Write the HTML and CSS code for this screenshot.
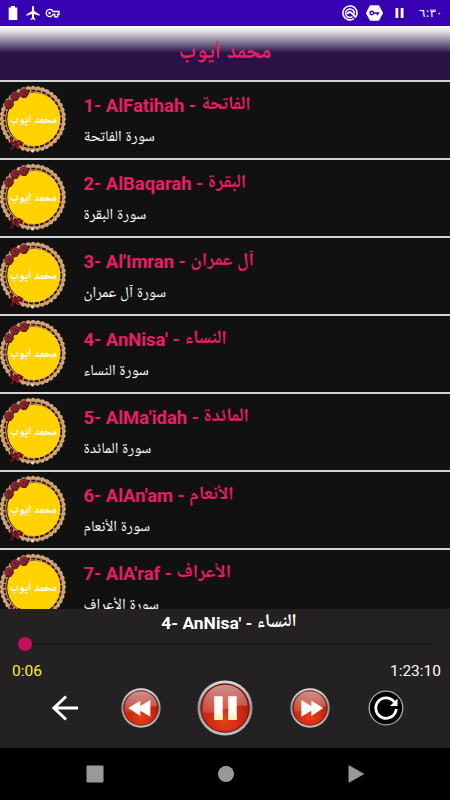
FILE: index.html
```html
<!DOCTYPE html>
<html lang="ar">
<head>
    <meta charset="UTF-8">
    <meta name="viewport" content="width=device-width, initial-scale=1.0">
    <title>محمد أيوب</title>
    <link rel="stylesheet" href="styles.css">
</head>
<body>
    <!-- shared artwork -->
    <svg class="defs" width="0" height="0" aria-hidden="true">
        <defs>
            <radialGradient id="red" cx="50%" cy="75%" r="70%">
                <stop offset="0" stop-color="#e8401c"/>
                <stop offset="0.6" stop-color="#c8250f"/>
                <stop offset="1" stop-color="#8e1009"/>
            </radialGradient>
            <linearGradient id="gloss" x1="0" y1="0" x2="0" y2="1">
                <stop offset="0" stop-color="#fff" stop-opacity="0.55"/>
                <stop offset="1" stop-color="#fff" stop-opacity="0.15"/>
            </linearGradient>
            <linearGradient id="metal" x1="0" y1="0" x2="0" y2="1">
                <stop offset="0" stop-color="#d8dadb"/>
                <stop offset="0.5" stop-color="#929596"/>
                <stop offset="1" stop-color="#bfc1c2"/>
            </linearGradient>
            <g id="ball">
                <circle cx="30" cy="30" r="29.5" fill="url(#metal)"/>
                <circle cx="30" cy="30" r="26.5" fill="#74100b"/>
                <circle cx="30" cy="30" r="25.5" fill="url(#red)"/>
                <path d="M6 28a24 23 0 0 1 48 0Q42 26 30 31T6 35z" fill="url(#gloss)"/>
            </g>
            <g id="rose">
                <path d="M-4-3L0-5l4 2 1 4-3 4h-4l-3-4z" fill="#6d1d25"/>
                <circle cx="-.5" cy="-.5" r="3.200" fill="#8c2d36"/>
                <path d="M-2 0q1-3 3-1t-2 2" fill="none" stroke="#561019" stroke-width=".8"/>
            </g>
        </defs>
        <symbol id="badge" viewBox="0 0 70 70">
            <circle cx="32.800" cy="35" r="30.800" fill="none" stroke="#b98d60" stroke-width="3"/>
            <circle cx="32.800" cy="35" r="31.300" fill="none" stroke="#d2aa7a" stroke-width="3.800" stroke-dasharray="0.1 4.816" stroke-linecap="round"/>
            <circle cx="32.800" cy="35" r="28.900" fill="none" stroke="#cda273" stroke-width="4.600"/>
            <circle cx="32.800" cy="35" r="28.400" fill="none" stroke="#3a1210" stroke-width="1.900" stroke-dasharray="4.200 1.300"/>
            <circle cx="33.800" cy="35.300" r="26.600" fill="#ffd200"/>
            <use href="#rose" x="9" y="20"/>
            <use href="#rose" x="15" y="12"/>
            <use href="#rose" x="24" y="9"/>
            <path d="M10 58l5 2 5 5M11 66l4-6 4-3 3 2-4 2-4-3M10 54l3 5" fill="none" stroke="#7c1117" stroke-width="2"/>
            <circle cx="32.500" cy="67" r="1.500" fill="#ded8d2"/>
            <text class="badge-text" x="33.500" y="41" text-anchor="middle" textLength="47" lengthAdjust="spacingAndGlyphs">محمد أيوب</text>
        </symbol>
    </svg>

    <div class="status-bar">
        <div class="status-icons">
            <svg width="10" height="14" viewBox="0 0 10 14"><path d="M3 0h4v1.400h2.300V14H.7V1.400H3z" fill="#fff"/></svg>
            <svg class="plane" width="14" height="14" viewBox="2 2 19 20"><path d="M21 16v-2l-8-5V3.500a1.500 1.500 0 0 0-3 0V9l-8 5v2l8-2.500V19l-2 1.500V22l3.500-1 3.500 1v-1.500L13 19v-5.500z" fill="#fff"/></svg>
            <svg width="15" height="10" viewBox="0 0 15 10"><path d="M8 3.500h6v3h-1.400v2.300H9.800V6.500H8a3.600 3.600 0 1 1 0-3z" fill="none" stroke="#fff" stroke-width="1.300"/><circle cx="4.600" cy="5" r="1.300" fill="#fff"/></svg>
        </div>
        <div class="status-icons right">
            <svg width="16" height="16" viewBox="0 0 16 16"><path d="M12 13.700A7 7 0 1 1 14 11.500" fill="none" stroke="#fff" stroke-width="1.600"/><path d="M10.500 11.700A4.300 4.300 0 1 1 12.200 9" fill="none" stroke="#fff" stroke-width="1.500"/><path d="M5.500 9q1.500-3 3.500-1.500l5 5" fill="none" stroke="#fff" stroke-width="1.800"/></svg>
            <svg width="17" height="16" viewBox="0 0 17 16"><path d="M5 .3h7Q13 .3 13.500 1.200L16.700 7.200q.4.800 0 1.600l-3.200 6q-.5.900-1.500.9H5q-1 0-1.500-.9L.3 8.800q-.4-.8 0-1.600l3.200-6Q4 .3 5 .3z" fill="#fff"/><circle cx="5.700" cy="8" r="1.700" fill="none" stroke="#3700b3" stroke-width="1.400"/><path d="M7.300 8h6M11.500 8v2.200" stroke="#3700b3" stroke-width="1.500"/></svg>
            <svg class="bars" width="9" height="10" viewBox="0 0 9 10"><path d="M.5 0h2.800v10H.5zM5.700 0h2.800v10H5.700z" fill="#fff"/></svg>
            <span class="clock">٦:٣٠</span>
        </div>
    </div>

    <h1 class="header">محمد أيوب</h1>

    <div class="list">
        <div class="row">
            <svg class="badge"><use href="#badge"/></svg>
            <div class="info">
                <div class="name">1- AlFatihah - <span class="ar">الفاتحة</span></div>
                <div class="sub">سورة الفاتحة</div>
            </div>
        </div>
        <div class="row">
            <svg class="badge"><use href="#badge"/></svg>
            <div class="info">
                <div class="name">2- AlBaqarah - <span class="ar">البقرة</span></div>
                <div class="sub">سورة البقرة</div>
            </div>
        </div>
        <div class="row">
            <svg class="badge"><use href="#badge"/></svg>
            <div class="info">
                <div class="name">3- Al'Imran - <span class="ar">آل عمران</span></div>
                <div class="sub">سورة آل عمران</div>
            </div>
        </div>
        <div class="row">
            <svg class="badge"><use href="#badge"/></svg>
            <div class="info">
                <div class="name">4- AnNisa' - <span class="ar">النساء</span></div>
                <div class="sub">سورة النساء</div>
            </div>
        </div>
        <div class="row">
            <svg class="badge"><use href="#badge"/></svg>
            <div class="info">
                <div class="name">5- AlMa'idah - <span class="ar">المائدة</span></div>
                <div class="sub">سورة المائدة</div>
            </div>
        </div>
        <div class="row">
            <svg class="badge"><use href="#badge"/></svg>
            <div class="info">
                <div class="name">6- AlAn'am - <span class="ar">الأنعام</span></div>
                <div class="sub">سورة الأنعام</div>
            </div>
        </div>
        <div class="row">
            <svg class="badge"><use href="#badge"/></svg>
            <div class="info">
                <div class="name">7- AlA'raf - <span class="ar">الأعراف</span></div>
                <div class="sub">سورة الأعراف</div>
            </div>
        </div>
    </div>

    <div class="player">
        <div class="now-playing">4- AnNisa' - <span class="ar">النساء</span></div>
        <div class="seek"><span class="thumb"></span><span class="track"></span></div>
        <div class="times">
            <span class="elapsed">0:06</span>
            <span>1:23:10</span>
        </div>
        <div class="controls">
            <svg class="back" width="26" height="26" viewBox="0 0 26 26"><path d="M26 13H2M14 1.500L2 13l12 11.500" fill="none" stroke="#fff" stroke-width="3"/></svg>
            <svg class="prev" width="40" height="40" viewBox="0 0 60 60"><use href="#ball"/><path d="M11 30L29 19v8l15-9v25L29 34v8z" fill="#fff"/></svg>
            <svg class="pause" width="56" height="56" viewBox="0 0 60 60"><use href="#ball"/><path d="M18.500 17.500h9v25h-9zM33.500 17.500h9v25h-9z" fill="#fff"/><path d="M18.500 37h9v5.500h-9zM33.500 37h9v5.500h-9z" fill="#fff3bd"/></svg>
            <svg class="next" width="40" height="40" viewBox="0 0 60 60"><use href="#ball"/><path d="M50 30L32 19v8L17 18v25l15-9v8z" fill="#fff"/></svg>
            <svg class="repeat" width="36" height="36" viewBox="0 0 36 36"><circle cx="18" cy="18" r="16.800" fill="#000" stroke="#aaa" stroke-width="1.300"/><path d="M26.200 12A10.200 10.200 0 1 0 28.200 19" fill="none" stroke="#fff" stroke-width="2.800"/><path d="M29.500 8.500v7.500H22z" fill="#fff"/></svg>
        </div>
    </div>

    <div class="nav-bar">
        <svg width="18" height="18" viewBox="0 0 18 18"><rect x=".5" y=".5" width="17" height="17" rx="1" fill="#999"/></svg>
        <svg width="18" height="18" viewBox="0 0 18 18"><circle cx="9" cy="9" r="8" fill="#999"/></svg>
        <svg width="18" height="18" viewBox="0 0 18 18"><path d="M2 .8L16.500 9 2 17.200z" fill="#999" stroke="#999" stroke-width="1" stroke-linejoin="round"/></svg>
    </div>
</body>
</html>
```
FILE: styles.css
```css
* {
    margin: 0;
    padding: 0;
    box-sizing: border-box;
}

body {
    width: 450px;
    height: 800px;
    overflow: hidden;
    display: flex;
    flex-direction: column;
    background: #000;
    color: #fff;
    font-family: Roboto, "Noto Naskh Arabic UI", "Noto Naskh Arabic", "DejaVu Sans", sans-serif;
}

svg {
    display: block;
    flex: none;
}

.defs {
    position: absolute;
}

.status-bar {
    height: 26px;
    flex: none;
    background: #3700b3;
    display: flex;
    justify-content: space-between;
    align-items: center;
    padding: 0 8px 0 8px;
}

.status-icons {
    display: flex;
    align-items: center;
}

.plane {
    margin: 0 5px 0 8px;
}

.right {
    gap: 8px;
}

.bars {
    margin: 0 7px 0 4px;
}

.clock {
    width: 23px;
    font-family: "DejaVu Sans", sans-serif;
    font-size: 12px;
    line-height: 16px;
    white-space: nowrap;
}

.header {
    height: 54px;
    flex: none;
    background: linear-gradient(#fff 0, #e4e1e7 5px, #281246 27px, #281246 100%);
    color: #e91e63;
    text-align: center;
    font-size: 22px;
    line-height: 56px;
    font-weight: bold;
}

.list {
    height: 529px;
    flex: none;
    overflow: hidden;
    background: #111;
}

.row {
    height: 78px;
    display: flex;
    border-top: 2px solid #d4d4d4;
}

.badge {
    width: 70px;
    height: 70px;
    margin-top: 2px;
}

.badge-text {
    font-size: 12px;
    font-weight: bold;
    fill: #fff;
}

.info {
    padding: 12px 0 0 13.5px;
}

.name {
    height: 24px;
    line-height: 24px;
    font-size: 18.4px;
    font-weight: bold;
    color: #e91e63;
    white-space: nowrap;
}

.sub {
    margin-top: 10px;
    height: 20px;
    line-height: 20px;
    font-size: 15.3px;
    color: #fff;
    white-space: nowrap;
}

.player {
    height: 139px;
    flex: none;
    background: #232122;
}

.now-playing {
    height: 28px;
    line-height: 28px;
    padding-left: 8px;
    text-align: center;
    font-size: 17.4px;
    font-weight: bold;
}

.seek {
    height: 14px;
    display: flex;
    align-items: center;
    padding: 0 17px 0 18px;
}

.thumb {
    width: 14px;
    height: 14px;
    border-radius: 50%;
    background: #c2105f;
}

.track {
    flex: 1;
    height: 2px;
    background: #1c1a1b;
}

/* Arabic part of a track name */
.ar {
    font-size: 1.03em;
    line-height: 1;
}

.times {
    display: flex;
    justify-content: space-between;
    padding: 10px 9px 0 12px;
    font-size: 15.5px;
    line-height: 20px;
}

.elapsed {
    color: #ffeb3b;
}

.controls {
    display: flex;
    align-items: center;
    height: 54px;
    padding-left: 52px;
}

.prev {
    margin-left: 43px;
}

.pause {
    margin-left: 36px;
}

.next {
    margin-left: 37px;
}

.repeat {
    margin-left: 38px;
}

.nav-bar {
    flex: 1;
    display: flex;
    justify-content: space-between;
    align-items: center;
    padding: 0 85px 0 86px;
}
```
